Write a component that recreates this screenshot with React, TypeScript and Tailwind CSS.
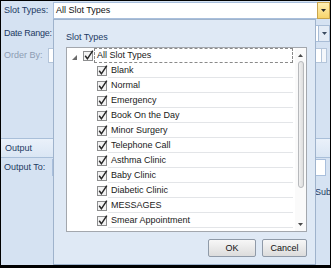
const SLOT_TYPES = [
  'Blank',
  'Normal',
  'Emergency',
  'Book On the Day',
  'Minor Surgery',
  'Telephone Call',
  'Asthma Clinic',
  'Baby Clinic',
  'Diabetic Clinic',
  'MESSAGES',
  'Smear Appointment',
];

function CheckBox() {
  return (
    <svg width="11" height="12" viewBox="0 0 11 12" className="shrink-0 overflow-visible">
      <rect x="0.5" y="1.5" width="9" height="9" fill="#f3f3f3" stroke="#8d8e8f" />
      <path d="M2.2 5.8 L4.4 8.8 L9.8 0.6" fill="none" stroke="#262626" strokeWidth="1.5" />
    </svg>
  );
}

function DownArrow({ color = '#2b2b2b' }: { color?: string }) {
  return (
    <svg width="5" height="3" viewBox="0 0 5 3">
      <path d="M0 0 H5 L2.5 3 Z" fill={color} />
    </svg>
  );
}

export default function App() {
  return (
    <div className="relative h-[268px] w-[331px] overflow-hidden border-t border-r border-l border-b-[3px] border-black bg-[#d5e2f2] font-['Liberation_Sans',Arial,sans-serif] text-[9px] leading-none whitespace-nowrap">
      {/* Slot Types combo */}
      <div className="mt-[1px] flex h-[17px] items-center">
        <div className="w-[52px] pl-[3px] text-[#1d3a63]">Slot Types:</div>
        <div className="flex h-full flex-1">
          <div className="flex flex-1 items-center border border-r-0 border-[#a9bfdc] bg-white pl-[2px] text-[#111]">
            All Slot Types
          </div>
          <div className="flex w-[13px] items-center justify-center border border-[#c9a44c] bg-gradient-to-b from-[#fff0b4] to-[#f8d46a]">
            <DownArrow />
          </div>
        </div>
      </div>

      {/* Date Range combo */}
      <div className="mt-[6px] flex h-[17px] items-center">
        <div className="w-[52px] shrink-0 pl-[3px] tracking-[-0.25px] text-[#1d3a63]">Date Range:</div>
        <div className="flex h-full flex-1">
          <div className="flex-1 border border-r-0 border-[#a9bfdc] bg-white" />
          <div className="flex w-[12px] items-center justify-center border border-[#a9bdd6] bg-[#e4ecf6]">
            <DownArrow color="#3a4a60" />
          </div>
        </div>
      </div>

      {/* Order By */}
      <div className="mt-[6px] mr-[3px] flex h-[15px] items-center">
        <div className="w-[47px] shrink-0 pl-[3px] text-[#8d9cb3]">Order By:</div>
        <div className="h-full flex-1 border border-[#b4c5da] bg-white" />
        <div className="h-full w-[5px] border border-l-0 border-[#b4c5da] bg-[#f4f7fb]" />
      </div>

      {/* Output section */}
      <div className="mt-[75px] flex h-[20px] items-center border-y border-[#a9bfd9] bg-gradient-to-b from-[#eaf1fa] to-[#dae6f4] pl-[4px] text-[#1d3a63]">
        Output
      </div>
      <div className="mt-[1px] mr-[4px] flex h-[17px] items-center">
        <div className="w-[51px] shrink-0 pl-[3px] text-[#1d3a63]">Output To:</div>
        <div className="h-full flex-1 border border-[#a9bfdc] bg-white" />
      </div>
      <div className="mt-[10px] flex h-[12px] items-center pl-[314px] text-[#1d3a63]">Sub</div>

      {/* Dropdown popup */}
      <div className="absolute top-[18px] left-[52px] flex h-[246px] w-[263px] flex-col border border-[#9fb3cc] bg-[#dfe9f5]">
        <div className="mt-[12px] ml-[12px] leading-[11px] text-[#1d3a63]">Slot Types</div>

        <div className="mt-[4px] ml-[12px] flex h-[185px] w-[241px] border border-[#a3a7ad] bg-white text-[#1a1a1a]">
          <div className="flex flex-1 flex-col">
            <div className="flex h-[15px] items-center">
              <svg width="5" height="5" viewBox="0 0 5 5" className="mt-[3px] ml-[5px]">
                <path d="M5 0 V5 H0 Z" fill="#6b6b6b" />
              </svg>
              <div className="ml-[6px]">
                <CheckBox />
              </div>
              <div className="mr-[2px] flex h-full flex-1 items-center border border-dashed border-[#8a8a8a] pl-[2px]">
                All Slot Types
              </div>
            </div>
            {SLOT_TYPES.map((name) => (
              <div key={name} className="flex h-[15px] items-center pl-[30px]">
                <CheckBox />
                <div className="mr-[2px] flex h-full flex-1 items-center border-b border-[#e3e5e8] pl-[3px]">
                  {name}
                </div>
              </div>
            ))}
          </div>

          {/* Scrollbar */}
          <div className="flex w-[11px] flex-col items-center bg-[#fafafa]">
            <svg width="5" height="3" viewBox="0 0 5 3" className="mt-[6px]">
              <path d="M0 3 H5 L2.5 0 Z" fill="#4a4a4a" />
            </svg>
            <div className="mt-[4px] h-[127px] w-[6px] rounded-[3px] border border-[#b7b9bc] bg-gradient-to-r from-[#f1f1f1] to-[#dedede]" />
            <div className="flex-1" />
            <div className="mb-[5px]">
              <DownArrow color="#4a4a4a" />
            </div>
          </div>
        </div>

        <div className="mt-[7px] flex justify-end gap-[6px] pr-[8px] text-[#111]">
          <button className="flex h-[18px] w-[48px] items-center justify-center rounded-[2px] border border-[#8f9aa8] bg-gradient-to-b from-[#f7f7f7] to-[#dcdcdc]">
            OK
          </button>
          <button className="flex h-[18px] w-[45px] items-center justify-center rounded-[2px] border border-[#8f9aa8] bg-gradient-to-b from-[#f7f7f7] to-[#dcdcdc]">
            Cancel
          </button>
        </div>
      </div>
    </div>
  );
}
